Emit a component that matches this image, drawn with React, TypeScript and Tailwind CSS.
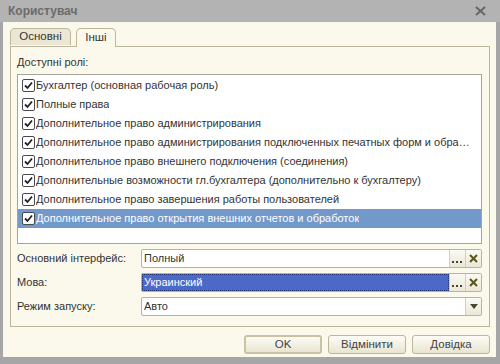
import React from "react";

const roles = [
  "Бухгалтер (основная рабочая роль)",
  "Полные права",
  "Дополнительное право администрирования",
  "Дополнительное право администрирования подключенных печатных форм и обработок",
  "Дополнительное право внешнего подключения (соединения)",
  "Дополнительные возможности гл.бухгалтера (дополнительно к бухгалтеру)",
  "Дополнительное право завершения работы пользователей",
  "Дополнительное право открытия внешних отчетов и обработок",
];

function Check() {
  return (
    <span className="w-[13px] h-[13px] shrink-0 border border-[#4a4a4a] bg-white rounded-[2px] flex items-center justify-center">
      <svg width="9" height="9" viewBox="0 0 9 9">
        <path d="M1 4.5 L3.5 7 L8 1.5" fill="none" stroke="#222" strokeWidth="1.8" />
      </svg>
    </span>
  );
}

function SmallBtn({ children }: { children: React.ReactNode }) {
  return (
    <span className="w-[16px] h-full shrink-0 border-l border-[#d4cfb8] bg-gradient-to-b from-[#fbfaf3] to-[#ebe8d8] flex items-center justify-center">
      {children}
    </span>
  );
}

const Dots = () => (
  <SmallBtn>
    <svg width="11" height="11" viewBox="0 0 11 11">
      <rect x="0" y="8" width="2" height="2" fill="#4a4530" />
      <rect x="4" y="8" width="2" height="2" fill="#4a4530" />
      <rect x="8" y="8" width="2" height="2" fill="#4a4530" />
    </svg>
  </SmallBtn>
);

const Clear = () => (
  <SmallBtn>
    <svg width="9" height="9" viewBox="0 0 9 9">
      <path d="M1 1 L8 8 M8 1 L1 8" stroke="#5c5420" strokeWidth="2" />
    </svg>
  </SmallBtn>
);

function Field({ label, value, selected, kind }: { label: string; value: string; selected?: boolean; kind: "pick" | "list" }) {
  return (
    <div className="flex items-center h-[19px]">
      <span className="w-[124px] shrink-0">{label}</span>
      <div className="flex-1 h-full flex border border-[#b9b39b] rounded-[2px] bg-white overflow-hidden">
        <div
          className={
            selected
              ? "flex-1 flex items-center px-[1px] bg-[#4d69c8] text-white border border-dotted border-[#1c2f70]"
              : "flex-1 flex items-center px-[2px]"
          }
        >
          {value}
        </div>
        {kind === "pick" ? (
          <>
            <Dots />
            <Clear />
          </>
        ) : (
          <SmallBtn>
            <svg width="8" height="5" viewBox="0 0 8 5">
              <path d="M0 0 H8 L4 5 Z" fill="#4a4530" />
            </svg>
          </SmallBtn>
        )}
      </div>
    </div>
  );
}

function Button({ children, primary }: { children: React.ReactNode; primary?: boolean }) {
  return (
    <button
      className={
        "h-[19px] w-[78px] rounded-[3px] bg-gradient-to-b from-[#fdfcf6] to-[#e9e5d2] text-[#444] text-[11.5px] flex items-center justify-center " +
        (primary ? "border-2 border-[#c9c2a4]" : "border border-[#bdb69a]")
      }
    >
      {children}
    </button>
  );
}

export default function App() {
  return (
    <div
      className="w-[500px] h-[364px] bg-[#a6a6a6] flex flex-col text-[11px] text-[#333]"
      style={{ fontFamily: '"Liberation Sans", Arial, sans-serif' }}
    >
      <header className="h-[22px] shrink-0 bg-[#b3b3b3] flex items-center justify-between pl-[8px] pr-[14px]">
        <span className="text-[12px] font-bold text-[#6b6b6b]">Користувач</span>
        <svg width="11" height="10" viewBox="0 0 11 10">
          <path d="M1 1 L10 9 M10 1 L1 9" stroke="#666" strokeWidth="2" />
        </svg>
      </header>

      <div className="flex-1 ml-[3px] mr-[4px] mb-[7px] bg-[#fbf9ec] pl-[7px] pr-[6px] pt-[6px] flex flex-col">
        <div className="flex items-end h-[18px] gap-[5px] relative z-10 text-[11.5px]">
          <div className="h-[17px] w-[61px] border border-b-0 border-[#bdb69a] rounded-t-[5px] bg-[#ebe7d5] flex items-center justify-center mb-[1px]">
            Основні
          </div>
          <div className="h-[19px] w-[40px] border border-b-0 border-[#bdb69a] rounded-t-[5px] bg-[#fbf9ec] flex items-center justify-center -mb-[1px]">
            Інші
          </div>
        </div>
        <div className="h-[281px] border border-[#bdb69a] pl-[6px] pr-[7px] pt-[8px] flex flex-col">
          <div className="leading-[14px] h-[19px]">Доступні ролі:</div>
          <div className="h-[170px] border border-[#a7a49a] bg-white pt-[1px] flex flex-col">
            {roles.map((r, i) => (
              <div
                key={r}
                className={
                  "h-[19px] flex items-center gap-[1px] pl-[4px] pr-[5px] whitespace-nowrap " +
                  (i === roles.length - 1 ? "bg-[#7399cb] text-white" : "")
                }
              >
                <Check />
                <span className="truncate">{r}</span>
              </div>
            ))}
          </div>
          <div className="flex flex-col gap-[5px] mt-[5px]">
            <Field label="Основний інтерфейс:" value="Полный" kind="pick" />
            <Field label="Мова:" value="Украинский" kind="pick" selected />
            <Field label="Режим запуску:" value="Авто" kind="list" />
          </div>
        </div>
        <div className="flex justify-end gap-[6px] mt-[8px]">
          <Button primary>OK</Button>
          <Button>Відмінити</Button>
          <Button>Довідка</Button>
        </div>
      </div>
    </div>
  );
}
